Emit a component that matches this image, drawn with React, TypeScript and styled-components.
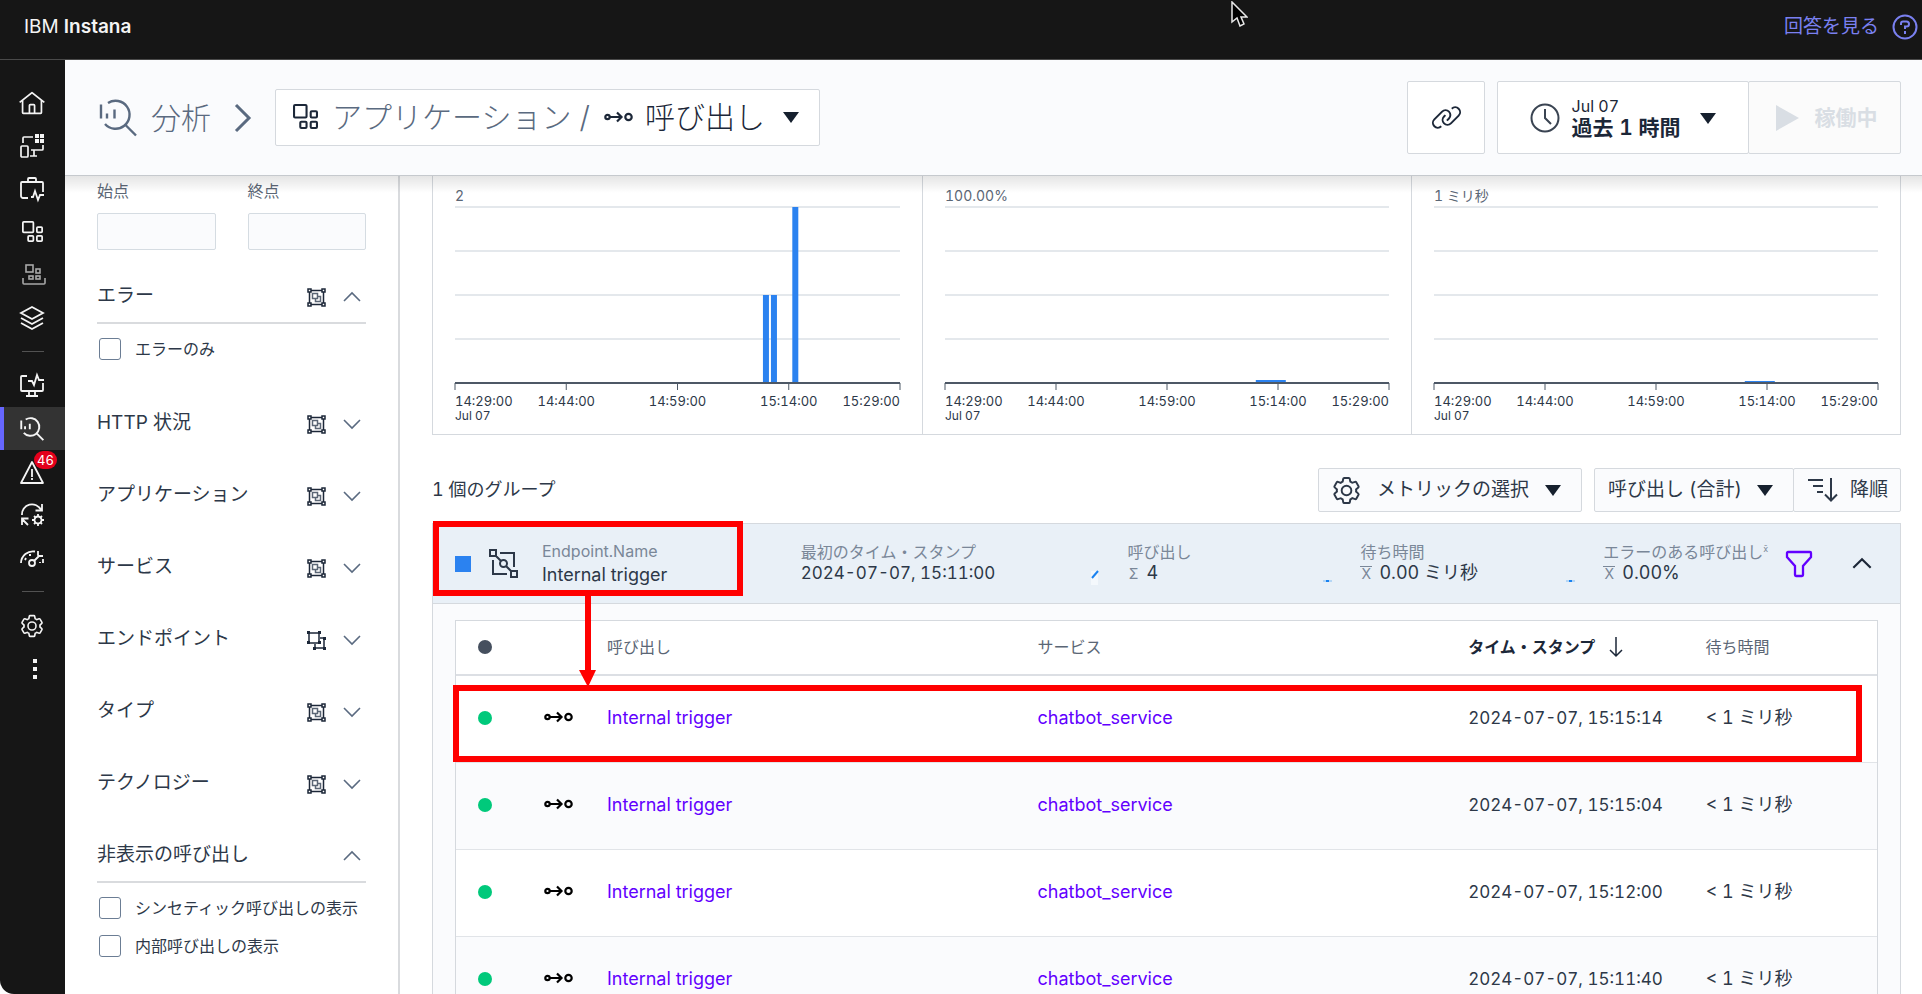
import React from "react";
import styled, { createGlobalStyle, css } from "styled-components";

const GlobalStyle = createGlobalStyle`
  *, *::before, *::after { box-sizing: border-box; }
  body {
    margin: 0;
    background: #ffffff;
    color: #2d3848;
    font-family: Inter, "Noto Sans CJK JP", sans-serif;
    font-size: 18px;
    font-variant-numeric: tabular-nums;
    line-height: 24px;
  }
  button, input, select { font: inherit; color: inherit; }
  button { cursor: pointer; }
`;

/* ---------- icons ---------- */

const Svg = styled.svg.attrs<{ strokeWidth?: number }>((p) => ({ strokeWidth: p.strokeWidth ?? 2 }))`
  display: block;
  flex: none;
  overflow: visible;
  fill: none;
  stroke: currentColor;
`;

const GEAR =
  "M27,16.76c0-.25,0-.5,0-.76s0-.51,0-.77l1.92-1.68A2,2,0,0,0,29.3,11L26.94,7a2,2,0,0,0-1.73-1,2,2,0,0,0-.64.1l-2.43.82a11.35,11.35,0,0,0-1.31-.75l-.51-2.52a2,2,0,0,0-2-1.61H13.64a2,2,0,0,0-2,1.61l-.51,2.52a11.48,11.48,0,0,0-1.32.75L7.43,6.06A2,2,0,0,0,6.79,6,2,2,0,0,0,5.06,7L2.7,11a2,2,0,0,0,.41,2.51L5,15.24c0,.25,0,.5,0,.76s0,.51,0,.77L3.11,18.45A2,2,0,0,0,2.7,21L5.06,25a2,2,0,0,0,1.73,1,2,2,0,0,0,.64-.1l2.43-.82a11.35,11.35,0,0,0,1.31.75l.51,2.52a2,2,0,0,0,2,1.61h4.72a2,2,0,0,0,2-1.61l.51-2.52a11.48,11.48,0,0,0,1.32-.75l2.42.82a2,2,0,0,0,.64.1,2,2,0,0,0,1.73-1L29.3,21a2,2,0,0,0-.41-2.51ZM25.21,24l-3.43-1.16a8.86,8.86,0,0,1-2.71,1.57L18.36,28H13.64l-.71-3.55a9.36,9.36,0,0,1-2.7-1.57L6.79,24,4.43,20l2.72-2.4a8.9,8.9,0,0,1,0-3.13L4.43,12,6.79,8l3.43,1.16a8.86,8.86,0,0,1,2.71-1.57L13.64,4h4.72l.71,3.55a9.36,9.36,0,0,1,2.7,1.57L25.21,8,27.57,12l-2.72,2.4a8.9,8.9,0,0,1,0,3.13L27.57,20Z M16,22a6,6,0,1,1,6-6A5.94,5.94,0,0,1,16,22Zm0-10a3.91,3.91,0,0,0-4,4,3.91,3.91,0,0,0,4,4,3.91,3.91,0,0,0,4-4A3.91,3.91,0,0,0,16,12Z";

const GearIcon = ({ size }: { size: number }) => (
  <Svg width={size} height={size} viewBox="1 1 30 30" aria-hidden="true">
    <path d={GEAR} fill="currentColor" stroke="none" />
  </Svg>
);

const HomeIcon = () => (
  <Svg width={26} height={24} viewBox="1 1 30 28" aria-hidden="true">
    <path
      fill="currentColor"
      stroke="none"
      d="M16.6123,2.2138a1.01,1.01,0,0,0-1.2427,0L1,13.4194l1.2427,1.5717L4,13.6209V26a2.0041,2.0041,0,0,0,2,2H26a2.0037,2.0037,0,0,0,2-2V13.63L29.7573,15,31,13.4282ZM18,26H14V18h4Zm2,0V18a2.0023,2.0023,0,0,0-2-2H14a2.002,2.002,0,0,0-2,2v8H6V12.0615l10-7.79,10,7.8005V26Z"
    />
  </Svg>
);

const DevicesIcon = () => (
  <Svg width={24} height={24} viewBox="0 0 24 24" strokeWidth={1.7} aria-hidden="true">
    <rect x="1" y="12" width="7" height="11" rx="1" />
    <path d="M3 9V4a1 1 0 0 1 1-1h9M23 11v4a1 1 0 0 1-1 1H11M14 16v6M10 22h7" />
    <path d="M15 0h4v4h-4zM20 0h4v4h-4zM15 5h4v4h-4zM20 5h4v4h-4z" fill="currentColor" stroke="none" />
  </Svg>
);

const ToolboxIcon = () => (
  <Svg width={24} height={24} viewBox="0 0 24 24" strokeWidth={1.8} aria-hidden="true">
    <path d="M8 21H3a2 2 0 0 1-2-2V6a1 1 0 0 1 1-1h20a1 1 0 0 1 1 1v9M8 5V2a1 1 0 0 1 1-1h6a1 1 0 0 1 1 1v3M11 20h2l2-6 3 9 2-5h4" />
  </Svg>
);

const AppsIcon = ({ size }: { size: number }) => (
  <Svg width={size} height={size} viewBox="0 0 24 24" aria-hidden="true">
    <rect x="1" y="1" width="12" height="12" rx="1" />
    <rect x="17" y="7" width="6" height="6" rx="1" />
    <rect x="7" y="17" width="6" height="6" rx="1" />
    <rect x="17" y="17" width="6" height="6" rx="1" />
  </Svg>
);

const AppTrayIcon = () => (
  <Svg width={24} height={22} viewBox="-3 0 24 22" strokeWidth={1.6} aria-hidden="true">
    <rect x="3" y="1" width="7" height="7" />
    <rect x="13" y="5" width="4" height="4" />
    <rect x="6" y="12" width="4" height="3" />
    <rect x="13" y="12" width="4" height="3" />
    <path d="M0 14v5a1 1 0 0 0 1 1h20a1 1 0 0 0 1-1v-5" />
  </Svg>
);

const LayersIcon = () => (
  <Svg width={24} height={24} viewBox="0 0 24 24" strokeWidth={1.8} aria-hidden="true">
    <path d="M12 1 23 7 12 13 1 7zM1 12l11 6 11-6M1 17l11 6 11-6" />
  </Svg>
);

const MonitorIcon = () => (
  <Svg width={24} height={24} viewBox="0 0 24 24" strokeWidth={1.8} aria-hidden="true">
    <path d="M7 2H2a1 1 0 0 0-1 1v13a1 1 0 0 0 1 1h20a1 1 0 0 0 1-1V9M9 17v5M15 17v5M6 22h12M8 7h4l2 4 3-10 2 5h5" />
  </Svg>
);

const AnalyzeIcon = ({ size }: { size: number }) => (
  <Svg width={size} height={size} viewBox="0 0 38 37" strokeWidth={size > 30 ? 2.4 : 3} aria-hidden="true">
    <path d="M9 3.500A14 14 0 1 1 6 24.500M26 25l11 11M2 5v14M8 14v5M15.500 10v9" />
  </Svg>
);

const WarningIcon = () => (
  <Svg width={24} height={24} viewBox="0 0 24 24" strokeWidth={1.8} aria-hidden="true">
    <path d="M12 2 23 23H1zM12 9v8M12 18v2" strokeLinejoin="round" />
  </Svg>
);

const AutomationIcon = () => (
  <Svg width={24} height={24} viewBox="0 0 24 24" strokeWidth={1.8} aria-hidden="true">
    <path d="M2 12A10 10 0 0 1 21 7M22 1v6.500h-6.500M2 22v-6.500h6.500M2 16l6 6" />
    <circle cx="18" cy="17" r="3.500" />
    <path d="M18 11v2.500M18 20.500V23M12 17h2.500M21.500 17H24M14 13l2 2M20 19l2 2M22 13l-2 2M16 19l-2 2" />
  </Svg>
);

const GaugeIcon = () => (
  <Svg width={24} height={24} viewBox="0 0 24 24" strokeWidth={1.8} aria-hidden="true">
    <path d="M1 17A12 12 0 0 1 15 5.500M5 14l1-2M9 9h2M20 16v1M23 13v4" />
    <circle cx="12" cy="17" r="3" />
    <path d="m14 15 5-5M18 5v4a1 1 0 0 0 1 1h4" />
  </Svg>
);

const KebabIcon = () => (
  <Svg width={24} height={24} viewBox="0 0 24 24" aria-hidden="true">
    <path d="M13 2h4v4h-4zM13 10h4v4h-4zM13 18h4v4h-4z" fill="currentColor" stroke="none" />
  </Svg>
);

const Chevron = ({ w, dir }: { w: number; dir: "up" | "down" | "right" }) => {
  const d = { up: "M1 10 9 2l8 8", down: "M1 2l8 8 8-8", right: "M2 1l13 13L2 27" }[dir];
  return (
    <Svg
      width={w}
      height={dir === "right" ? 28 : Math.round((w * 12) / 18)}
      viewBox={dir === "right" ? "0 0 16 28" : "0 0 18 12"}
      strokeWidth={dir === "right" ? 3 : w > 18 ? 2 : 1.6}
      aria-hidden="true"
    >
      <path d={d} />
    </Svg>
  );
};

const Caret = () => (
  <Svg width={16} height={12} viewBox="0 0 16 12" aria-hidden="true">
    <path d="M0 1h16L8 12z" fill="#16202e" stroke="none" />
  </Svg>
);

const CallIcon = () => (
  <Svg width={29} height={12} viewBox="0 0 29 12" strokeWidth={2.2} aria-hidden="true">
    <circle cx="3.500" cy="6" r="2.200" />
    <path d="M6 6h11M13 1.500 17.500 6 13 10.500" />
    <circle cx="24.500" cy="6" r="3.200" />
  </Svg>
);

const GroupIcon = () => (
  <Svg width={19} height={19} viewBox="0 0 19 19" strokeWidth={1.5} aria-hidden="true">
    <path d="M4 2.500h11M4 16.500h11M2.500 4v11M16.500 4v11" />
    <path d="M1 1h3v3H1zM15 1h3v3h-3zM1 15h3v3H1zM15 15h3v3h-3z" />
    <path d="M5.500 5.500h5v5h-5zM10.500 8.500h3v5h-5v-3" stroke="#5b6675" />
  </Svg>
);

const UngroupIcon = () => (
  <Svg width={19} height={19} viewBox="0 0 19 19" strokeWidth={1.5} aria-hidden="true">
    <path d="M2 2h10v10H2zM13 7h4v10H8v-4" />
    <path
      d="M0 0h3v3H0zM11 0h3v3h-3zM0 10h3v3H0zM11 10h3v3h-3zM16 6h3v3h-3zM16 16h3v3h-3zM6 16h3v3H6z"
      fill="currentColor"
      stroke="none"
    />
  </Svg>
);

const EndpointIcon = () => (
  <Svg width={29} height={29} viewBox="0 0 29 29" aria-hidden="true">
    <path d="M1 1h6v6H1zM22 22h6v6h-6zM7 7l5 5M17 17l5 5M11 4h14v14M4 11v14h14" />
    <circle cx="14.500" cy="14.500" r="3.500" />
  </Svg>
);

const LinkIcon = () => (
  <Svg width={31} height={25} viewBox="0 4 32 25" aria-hidden="true">
    <g fill="currentColor" stroke="none">
      <path d="M29.25,6.76a6,6,0,0,0-8.5,0l1.42,1.42a4,4,0,1,1,5.67,5.67l-8,8a4,4,0,1,1-5.67-5.66l1.41-1.42-1.41-1.42-1.42,1.42a6,6,0,0,0,0,8.5A6,6,0,0,0,17,25a6,6,0,0,0,4.27-1.76l8-8A6,6,0,0,0,29.25,6.76Z" />
      <path d="M4.19,24.82a4,4,0,0,1,0-5.67l8-8a4,4,0,0,1,5.67,0A3.94,3.94,0,0,1,19,14a4,4,0,0,1-1.17,2.85L15.71,19l1.42,1.42,2.12-2.12a6,6,0,0,0-8.51-8.51l-8,8a6,6,0,0,0,0,8.51A6,6,0,0,0,7,28a6.07,6.07,0,0,0,4.28-1.76L9.86,24.82A4,4,0,0,1,4.19,24.82Z" />
    </g>
  </Svg>
);

const ClockIcon = () => (
  <Svg width={30} height={30} viewBox="0 0 30 30" color="#3a4452" aria-hidden="true">
    <circle cx="15" cy="15" r="13.500" />
    <path d="M15 6v9l6 6" />
  </Svg>
);

const SortIcon = () => (
  <Svg width={30} height={24} viewBox="0 0 30 24" aria-hidden="true">
    <path d="M0 2h15M5 8h10M9 14h6M23 0v22M17 16.500l6 6 6-6" />
  </Svg>
);

const FunnelIcon = () => (
  <Svg width={26} height={26} viewBox="0 0 26 26" color="#6200ff" strokeWidth={2.3} aria-hidden="true">
    <path d="M2 1h22a1 1 0 0 1 1 1v4l-8 9v9a1 1 0 0 1-1 1h-6a1 1 0 0 1-1-1v-9L1 6V2a1 1 0 0 1 1-1z" />
  </Svg>
);

const HelpIcon = () => (
  <Svg width={26} height={26} viewBox="0 0 26 26" aria-hidden="true">
    <circle cx="13" cy="13" r="11.500" />
    <path d="M9 11V9.500a2 2 0 0 1 2-2h3.500a2.500 2.500 0 0 1 0 5H13V15M13 17v3" />
  </Svg>
);

/* ---------- top bar ---------- */

const Shell = styled.div`
  display: flex;
  flex-direction: column;
  height: 100vh;
  overflow: hidden;
`;

const TopBar = styled.header`
  position: relative;
  display: flex;
  align-items: center;
  justify-content: space-between;
  flex: none;
  height: 60px;
  padding: 0 4px 5px 24px;
  background: #161616;
  border-bottom: 1px solid #4a4a4a;
`;

const Brand = styled.span`
  color: #f4f4f4;
  font-size: 19px;
  strong { font-weight: 600; }
`;

const HelpLink = styled.a`
  display: flex;
  align-items: center;
  gap: 13px;
  color: #7a80f0;
  font-size: 19px;
  text-decoration: none;
`;

const Pointer = styled.svg`
  position: absolute;
  left: 64%;
  top: 1px;
`;

const Body = styled.div`
  display: flex;
  flex: 1;
  min-height: 0;
`;

/* ---------- side navigation ---------- */

const Nav = styled.nav`
  display: flex;
  flex-direction: column;
  flex: none;
  width: 65px;
  padding-top: 21px;
  background: #161616;
  border-bottom-left-radius: 14px;
`;

const NavItem = styled.a<{ $active?: boolean; $dim?: boolean }>`
  position: relative;
  display: flex;
  align-items: center;
  justify-content: center;
  height: 43px;
  padding-right: 1px;
  color: ${(p) => (p.$dim ? "#a8a8a8" : "#f4f4f4")};
  ${(p) =>
    p.$active &&
    css`
      background: #333333;
      box-shadow: inset 4px 0 0 #6666ff;
    `}
`;

const NavRule = styled.hr`
  width: 22px;
  height: 1px;
  margin: 12px auto;
  border: 0;
  background: #525252;
`;

const Badge = styled.span`
  position: absolute;
  top: 1px;
  left: 34px;
  padding: 0 3px;
  border-radius: 9px;
  background: #e3001b;
  color: #ffffff;
  font-size: 13px;
  line-height: 18px;
`;

/* ---------- page header ---------- */

const Main = styled.div`
  display: flex;
  flex-direction: column;
  flex: 1;
  min-width: 0;
`;

const PageHeader = styled.div`
  position: relative;
  z-index: 2;
  display: flex;
  align-items: center;
  justify-content: space-between;
  flex: none;
  height: 116px;
  padding: 0 21px 0 34px;
  background: #fafbfd;
  border-bottom: 1px solid #dde1e6;
  &::after {
    content: "";
    position: absolute;
    top: 100%;
    left: 0;
    right: 0;
    height: 18px;
    background: linear-gradient(rgba(0, 0, 0, 0.11), rgba(0, 0, 0, 0));
  }
`;

const Crumbs = styled.div`
  display: flex;
  align-items: center;
  color: #5a6a80;
  font-size: 30px;
  font-weight: 300;
  line-height: 36px;
`;

const CrumbLink = styled.a`
  display: flex;
  align-items: center;
  gap: 14px;
  margin-right: 23px;
  color: inherit;
  text-decoration: none;
`;

const SourceButton = styled.button`
  display: flex;
  align-items: center;
  height: 57px;
  margin-left: 25px;
  padding: 0 20px 2px 17px;
  border: 1px solid #d5d9de;
  border-radius: 2px;
  background: #ffffff;
  color: #1c2738;
`;

const SourceType = styled.span`
  margin: 0 14px 0 14px;
  color: #5a6a80;
`;

const SourceName = styled.span`
  margin: 0 18px 0 12px;
`;

const HeaderTools = styled.div`
  display: flex;
  height: 73px;
`;

const ToolButton = styled.button<{ $width: number; $gap?: number; $joined?: boolean }>`
  display: flex;
  align-items: center;
  justify-content: center;
  width: ${(p) => p.$width}px;
  margin: 0 0 0 ${(p) => p.$gap ?? 0}px;
  padding: 0;
  border: 1px solid #d5d9de;
  border-radius: 2px;
  background: #ffffff;
  color: #1c2738;
  text-align: left;
  ${(p) =>
    p.$joined &&
    css`
      padding-left: 4px;
      gap: 16px;
      background: #fbfbfb;
      color: #d9dee4;
      font-size: 21px;
    `}
`;

const TimeText = styled.span`
  display: grid;
  margin: 0 20px 0 12px;
  font-size: 16px;
  line-height: 20px;
  strong {
    font-size: 21px;
    font-weight: 600;
    line-height: 24px;
  }
`;

const Columns = styled.div`
  display: flex;
  flex: 1;
  min-height: 0;
`;

/* ---------- filter panel ---------- */

const Filters = styled.aside`
  flex: none;
  width: 335px;
  padding: 3px 32px 0;
  border-right: 2px solid #d9dbde;
`;

const Range = styled.div`
  display: grid;
  grid-template-columns: 1fr 1fr;
  gap: 32px;
  margin-bottom: 22px;
  color: #5b6675;
  font-size: 16px;
  label { display: grid; gap: 10px; }
`;

const RangeInput = styled.input`
  width: 100%;
  height: 37px;
  border: 1px solid #d5dce2;
  border-radius: 2px;
  background: #fafbfd;
`;

const FilterSection = styled.section`
  margin-bottom: 22px;
`;

const FilterHead = styled.div<{ $open?: boolean }>`
  display: flex;
  align-items: center;
  height: ${(p) => (p.$open ? 52 : 50)}px;
  padding-right: 5px;
  border-bottom: ${(p) => (p.$open ? "2px solid #d9dbde" : "0")};
`;

const FilterTitle = styled.h3`
  flex: 1;
  margin: 0 0 2px;
  font-size: 19px;
  font-weight: 400;
  color: #2d3848;
`;

const IconButton = styled.button<{ $tone?: string; $gap?: number }>`
  display: flex;
  padding: 0;
  margin: 0 0 0 ${(p) => p.$gap ?? 0}px;
  border: 0;
  background: none;
  color: ${(p) => p.$tone ?? "#1c2738"};
`;

const FilterBody = styled.div`
  padding: 6px 0 9px;
  margin-right: -16px;
`;

const CheckRow = styled.label`
  display: flex;
  align-items: center;
  height: 38px;
  padding-left: 2px;
  gap: 14px;
  font-size: 16px;
  white-space: nowrap;
`;

const Check = styled.input`
  appearance: none;
  flex: none;
  width: 22px;
  height: 22px;
  margin: 0;
  border: 1px solid #6b7d94;
  border-radius: 3px;
  background: #ffffff;
`;

/* ---------- content ---------- */

const Content = styled.main`
  flex: 1;
  min-width: 0;
  padding: 0 21px 0 32px;
`;

const ChartRow = styled.div`
  display: grid;
  grid-template-columns: repeat(3, 1fr);
  border: 1px solid #d5d9de;
  border-top: 0;
`;

const ChartCard = styled.div`
  padding: 0 22px;
  & + & { border-left: 1px solid #d5d9de; }
`;

const ChartSvg = styled.svg`
  display: block;
  width: 100%;
  height: 258px;
  overflow: visible;
  font-size: 13px;
  fill: #2d3848;
`;

const Toolbar = styled.div`
  display: flex;
  align-items: center;
  height: 44px;
  margin: 33px 0 11px;
`;

const GroupCount = styled.h2`
  flex: 1;
  margin: 0;
  font-size: 18px;
  font-weight: 400;
`;

const BarButton = styled.button<{ $width: number; $joined?: boolean }>`
  display: flex;
  align-items: center;
  justify-content: space-between;
  width: ${(p) => p.$width}px;
  height: 44px;
  margin-left: ${(p) => (p.$joined ? -1 : 12)}px;
  padding: 0 ${(p) => (p.$joined ? 12 : 20)}px 0 ${(p) => (p.$joined ? 14 : 13)}px;
  border: 1px solid #d5d9de;
  border-radius: 2px;
  background: #fafbfd;
  color: #2d3848;
  font-size: 19px;
`;

const GroupPanel = styled.section`
  position: relative;
  border: 1px solid #d5d9de;
  border-bottom: 0;
  background: #fafbfd;
`;

const GroupHead = styled.div`
  display: grid;
  grid-template-columns: 368fr 290fr 233fr 243fr 220fr 114fr;
  align-items: center;
  height: 80px;
  background: #e9f0f7;
  border-bottom: 1px solid #d5d9de;
`;

const NameCell = styled.div`
  display: flex;
  align-items: center;
  padding-left: 22px;
`;

const Swatch = styled.span`
  width: 16px;
  height: 16px;
  margin-right: 18px;
  background: #2b82f0;
`;

const NameText = styled.div`
  margin-left: 24px;
  padding-bottom: 2px;
  small { display: block; color: #7a8798; font-size: 16px; }
`;

const Metric = styled.div`
  display: flex;
  align-items: flex-end;
  min-width: 0;
`;

const Spark = styled.svg`
  flex: none;
  width: 37px;
  height: 18px;
`;

const MetricText = styled.div`
  padding-bottom: 4px;
  line-height: 20px;
  white-space: nowrap;
  small { display: block; color: #7a8798; font-size: 16px; line-height: 22px; }
  sup { font-size: 9px; line-height: 0; }
`;

const Agg = styled.span<{ $mean?: boolean }>`
  display: inline-block;
  width: 12px;
  margin-right: 7px;
  border-top: ${(p) => (p.$mean ? "1px solid #7a8798" : "0")};
  color: #7a8798;
  font-size: 14px;
  line-height: 14px;
  text-align: center;
`;

const HeadTools = styled.div`
  display: flex;
  align-items: center;
`;

const TableWrap = styled.div`
  padding: 16px 22px 0;
`;

const Table = styled.table`
  width: 100%;
  table-layout: fixed;
  border-collapse: separate;
  border-spacing: 0;
  border: 1px solid #d5d9de;
  background: #ffffff;
  th, td {
    padding: 0;
    text-align: left;
    white-space: nowrap;
  }
  th {
    height: 55px;
    padding-bottom: 2px;
    border-bottom: 2px solid #dcdfe4;
    color: #5b6675;
    font-size: 16px;
    font-weight: 400;
  }
  td {
    height: 87px;
    padding-bottom: 2px;
    border-bottom: 1px solid #e1e4e8;
  }
  tbody tr:nth-child(even) { background: #fafbfd; }
`;

const Time = styled.time`
  font-size: 17px;
`;

const SortHeader = styled.button`
  display: flex;
  align-items: center;
  gap: 14px;
  padding: 0;
  border: 0;
  background: none;
  color: #1c2738;
  font-weight: 700;
`;

const Dot = styled.span<{ $color: string }>`
  display: block;
  width: 14px;
  height: 14px;
  margin-left: 22px;
  border-radius: 50%;
  background: ${(p) => p.$color};
`;

const CallCell = styled.td`
  color: #000000;
  svg { margin-bottom: 3px; }
`;

const CellLink = styled.a`
  color: #6200ff;
  text-decoration: none;
`;

/* ---------- annotations ---------- */

const NameMark = styled.div`
  position: absolute;
  top: -3px;
  left: 0;
  width: 310px;
  height: 75px;
  border: 6px solid #ff0000;
`;

const RowMark = styled.div`
  position: absolute;
  top: 161px;
  left: 20px;
  right: 38px;
  height: 77px;
  border: 6px solid #ff0000;
`;

const ArrowMark = styled.svg`
  position: absolute;
  top: 71px;
  left: 146px;
`;

/* ---------- data ---------- */

type Bar = { at: number; width: number; height: number };

const charts: { label: string; bars: Bar[] }[] = [
  {
    label: "2",
    bars: [
      { at: 69.2, width: 6, height: 88 },
      { at: 71, width: 6, height: 88 },
      { at: 75.8, width: 6, height: 176 },
    ],
  },
  { label: "100.00%", bars: [{ at: 70, width: 30, height: 3 }] },
  { label: "1 ミリ秒", bars: [{ at: 70, width: 30, height: 2 }] },
];

const ticks: { at: string; label: string; anchor: "start" | "middle" | "end" }[] = [
  { at: "0%", label: "14:29:00", anchor: "start" },
  { at: "25%", label: "14:44:00", anchor: "middle" },
  { at: "50%", label: "14:59:00", anchor: "middle" },
  { at: "75%", label: "15:14:00", anchor: "middle" },
  { at: "100%", label: "15:29:00", anchor: "end" },
];

const calls = ["15:15:14", "15:15:04", "15:12:00", "15:11:40"];

const filters = [
  { title: "HTTP 状況" },
  { title: "アプリケーション" },
  { title: "サービス" },
  { title: "エンドポイント", split: true },
  { title: "タイプ" },
  { title: "テクノロジー" },
];

/* ---------- parts ---------- */

const Chart = ({ label, bars }: { label: string; bars: Bar[] }) => (
  <ChartCard>
    <ChartSvg role="img" aria-label={label}>
      {[31, 75, 119, 163].map((y) => (
        <line key={y} x1="0" x2="100%" y1={y} y2={y} stroke="#e4e8ec" strokeWidth={2} />
      ))}
      {bars.map((b) => (
        <rect key={b.at} x={`${b.at}%`} y={207 - b.height} width={b.width} height={b.height} fill="#2b82f0" />
      ))}
      <line x1="0" x2="100%" y1="207" y2="207" stroke="#4d5866" strokeWidth={2} />
      {ticks.map((t) => (
        <line key={t.at} x1={t.at} x2={t.at} y1="207" y2="214" stroke="#4d5866" strokeWidth={1} />
      ))}
      <text x="0" y="25" fontSize="14" fill="#5b6675">{label}</text>
      {ticks.map((t) => (
        <text key={t.at} x={t.at} y="230" textAnchor={t.anchor}>{t.label}</text>
      ))}
      <text x="0" y="244" fontSize="12">Jul 07</text>
    </ChartSvg>
  </ChartCard>
);

type SectionHeadProps = { title: string; open?: boolean; split?: boolean; noGroup?: boolean };

const SectionHead = ({ title, open, split, noGroup }: SectionHeadProps) => (
  <FilterHead $open={open}>
    <FilterTitle>{title}</FilterTitle>
    {!noGroup && <IconButton aria-label={`${title} グループ`}>{split ? <UngroupIcon /> : <GroupIcon />}</IconButton>}
    <IconButton $tone="#5a6a80" $gap={17} aria-label={title}>
      <Chevron w={18} dir={open ? "up" : "down"} />
    </IconButton>
  </FilterHead>
);

const FlatSpark = () => (
  <Spark aria-hidden="true">
    <path d="M0 12h9" stroke="#b5d6f5" strokeWidth="2" />
    <path d="M3 12h3" stroke="#1a82f0" strokeWidth="2" />
  </Spark>
);

export default function App() {
  return (
    <Shell>
      <GlobalStyle />
      <TopBar>
        <Brand>IBM <strong>Instana</strong></Brand>
        <HelpLink href="#help">
          回答を見る
          <HelpIcon />
        </HelpLink>
        <Pointer width="18" height="26" viewBox="0 0 18 26" aria-hidden="true">
          <path d="M2 1v20l5-4 3 8 4-2-3-7h6z" fill="#000000" stroke="#e8e8e8" strokeWidth="1.500" />
        </Pointer>
      </TopBar>
      <Body>
        <Nav>
          <NavItem href="#home" aria-label="ホーム"><HomeIcon /></NavItem>
          <NavItem href="#devices" aria-label="Web サイト"><DevicesIcon /></NavItem>
          <NavItem href="#business" aria-label="ビジネス"><ToolboxIcon /></NavItem>
          <NavItem href="#apps" aria-label="アプリケーション"><AppsIcon size={21} /></NavItem>
          <NavItem href="#platforms" aria-label="プラットフォーム" $dim><AppTrayIcon /></NavItem>
          <NavItem href="#infra" aria-label="インフラストラクチャー"><LayersIcon /></NavItem>
          <NavRule />
          <NavItem href="#synthetic" aria-label="シンセティック"><MonitorIcon /></NavItem>
          <NavItem href="#analyze" aria-label="分析" $active><AnalyzeIcon size={24} /></NavItem>
          <NavItem href="#events" aria-label="イベント"><WarningIcon /><Badge>46</Badge></NavItem>
          <NavItem href="#automation" aria-label="自動化"><AutomationIcon /></NavItem>
          <NavItem href="#slo" aria-label="サービス・レベル"><GaugeIcon /></NavItem>
          <NavRule />
          <NavItem href="#settings" aria-label="設定"><GearIcon size={24} /></NavItem>
          <NavItem href="#more" aria-label="その他"><KebabIcon /></NavItem>
        </Nav>
        <Main>
          <PageHeader>
            <Crumbs>
              <CrumbLink href="#analyze"><AnalyzeIcon size={38} />分析</CrumbLink>
              <Chevron w={16} dir="right" />
              <SourceButton>
                <AppsIcon size={25} />
                <SourceType>アプリケーション /</SourceType>
                <CallIcon />
                <SourceName>呼び出し</SourceName>
                <Caret />
              </SourceButton>
            </Crumbs>
            <HeaderTools>
              <ToolButton $width={78} aria-label="リンク"><LinkIcon /></ToolButton>
              <ToolButton $width={252} $gap={12}>
                <ClockIcon />
                <TimeText>Jul 07<strong>過去 1 時間</strong></TimeText>
                <Caret />
              </ToolButton>
              <ToolButton $width={153} $gap={-1} $joined disabled>
                <Svg width={23} height={26} viewBox="0 0 23 26" aria-hidden="true">
                  <path d="M0 0l23 13L0 26z" fill="currentColor" stroke="none" />
                </Svg>
                <strong>稼働中</strong>
              </ToolButton>
            </HeaderTools>
          </PageHeader>
          <Columns>
            <Filters>
              <Range>
                <label>始点<RangeInput type="text" /></label>
                <label>終点<RangeInput type="text" /></label>
              </Range>
              <FilterSection>
                <SectionHead title="エラー" open />
                <FilterBody>
                  <CheckRow><Check type="checkbox" />エラーのみ</CheckRow>
                </FilterBody>
              </FilterSection>
              {filters.map((f) => (
                <FilterSection key={f.title}>
                  <SectionHead title={f.title} split={f.split} />
                </FilterSection>
              ))}
              <FilterSection>
                <SectionHead title="非表示の呼び出し" open noGroup />
                <FilterBody>
                  <CheckRow><Check type="checkbox" />シンセティック呼び出しの表示</CheckRow>
                  <CheckRow><Check type="checkbox" />内部呼び出しの表示</CheckRow>
                </FilterBody>
              </FilterSection>
            </Filters>
            <Content>
              <ChartRow>
                {charts.map((c) => <Chart key={c.label} {...c} />)}
              </ChartRow>
              <Toolbar>
                <GroupCount>1 個のグループ</GroupCount>
                <BarButton $width={264}><GearIcon size={29} />メトリックの選択<Caret /></BarButton>
                <BarButton $width={200}>呼び出し (合計)<Caret /></BarButton>
                <BarButton $width={108} $joined><SortIcon />降順</BarButton>
              </Toolbar>
              <GroupPanel>
                <GroupHead>
                  <NameCell>
                    <Swatch />
                    <EndpointIcon />
                    <NameText><small>Endpoint.Name</small>Internal trigger</NameText>
                  </NameCell>
                  <Metric>
                    <MetricText><small>最初のタイム・スタンプ</small><Time>2024-07-07, 15:11:00</Time></MetricText>
                  </Metric>
                  <Metric>
                    <Spark aria-hidden="true">
                      <rect x="0" y="2" width="7" height="14" fill="#f4f8fc" />
                      <path d="M1 9l6-7" stroke="#1a82f0" strokeWidth="2" />
                    </Spark>
                    <MetricText><small>呼び出し</small><Agg>Σ</Agg>4</MetricText>
                  </Metric>
                  <Metric>
                    <FlatSpark />
                    <MetricText><small>待ち時間</small><Agg $mean>X</Agg>0.00 ミリ秒</MetricText>
                  </Metric>
                  <Metric>
                    <FlatSpark />
                    <MetricText><small>エラーのある呼び出し<sup>x̄</sup></small><Agg $mean>X</Agg>0.00%</MetricText>
                  </Metric>
                  <HeadTools>
                    <IconButton aria-label="フィルター"><FunnelIcon /></IconButton>
                    <IconButton $gap={40} aria-label="閉じる"><Chevron w={20} dir="up" /></IconButton>
                  </HeadTools>
                </GroupHead>
                <TableWrap>
                  <Table>
                    <colgroup>
                      <col width="88" />
                      <col width="63" />
                      <col width="30.3%" />
                      <col width="30.3%" />
                      <col width="16.7%" />
                      <col />
                    </colgroup>
                    <thead>
                      <tr>
                        <th><Dot $color="#454f5e" /></th>
                        <th />
                        <th>呼び出し</th>
                        <th>サービス</th>
                        <th>
                          <SortHeader>
                            タイム・スタンプ
                            <Svg width={14} height={20} viewBox="0 0 14 20" strokeWidth={1.5} aria-hidden="true">
                              <path d="M7 0v19M1 13l6 6 6-6" />
                            </Svg>
                          </SortHeader>
                        </th>
                        <th>待ち時間</th>
                      </tr>
                    </thead>
                    <tbody>
                      {calls.map((time) => (
                        <tr key={time}>
                          <td><Dot $color="#00c97b" /></td>
                          <CallCell><CallIcon /></CallCell>
                          <td><CellLink href="#call">Internal trigger</CellLink></td>
                          <td><CellLink href="#service">chatbot_service</CellLink></td>
                          <td><Time>2024-07-07, {time}</Time></td>
                          <td>&lt; 1 ミリ秒</td>
                        </tr>
                      ))}
                    </tbody>
                  </Table>
                </TableWrap>
                <NameMark />
                <ArrowMark width="18" height="92" viewBox="0 0 18 92" aria-hidden="true">
                  <path d="M6 0h6v75h5L9 92 0 75h6z" fill="#ff0000" />
                </ArrowMark>
                <RowMark />
              </GroupPanel>
            </Content>
          </Columns>
        </Main>
      </Body>
    </Shell>
  );
}
